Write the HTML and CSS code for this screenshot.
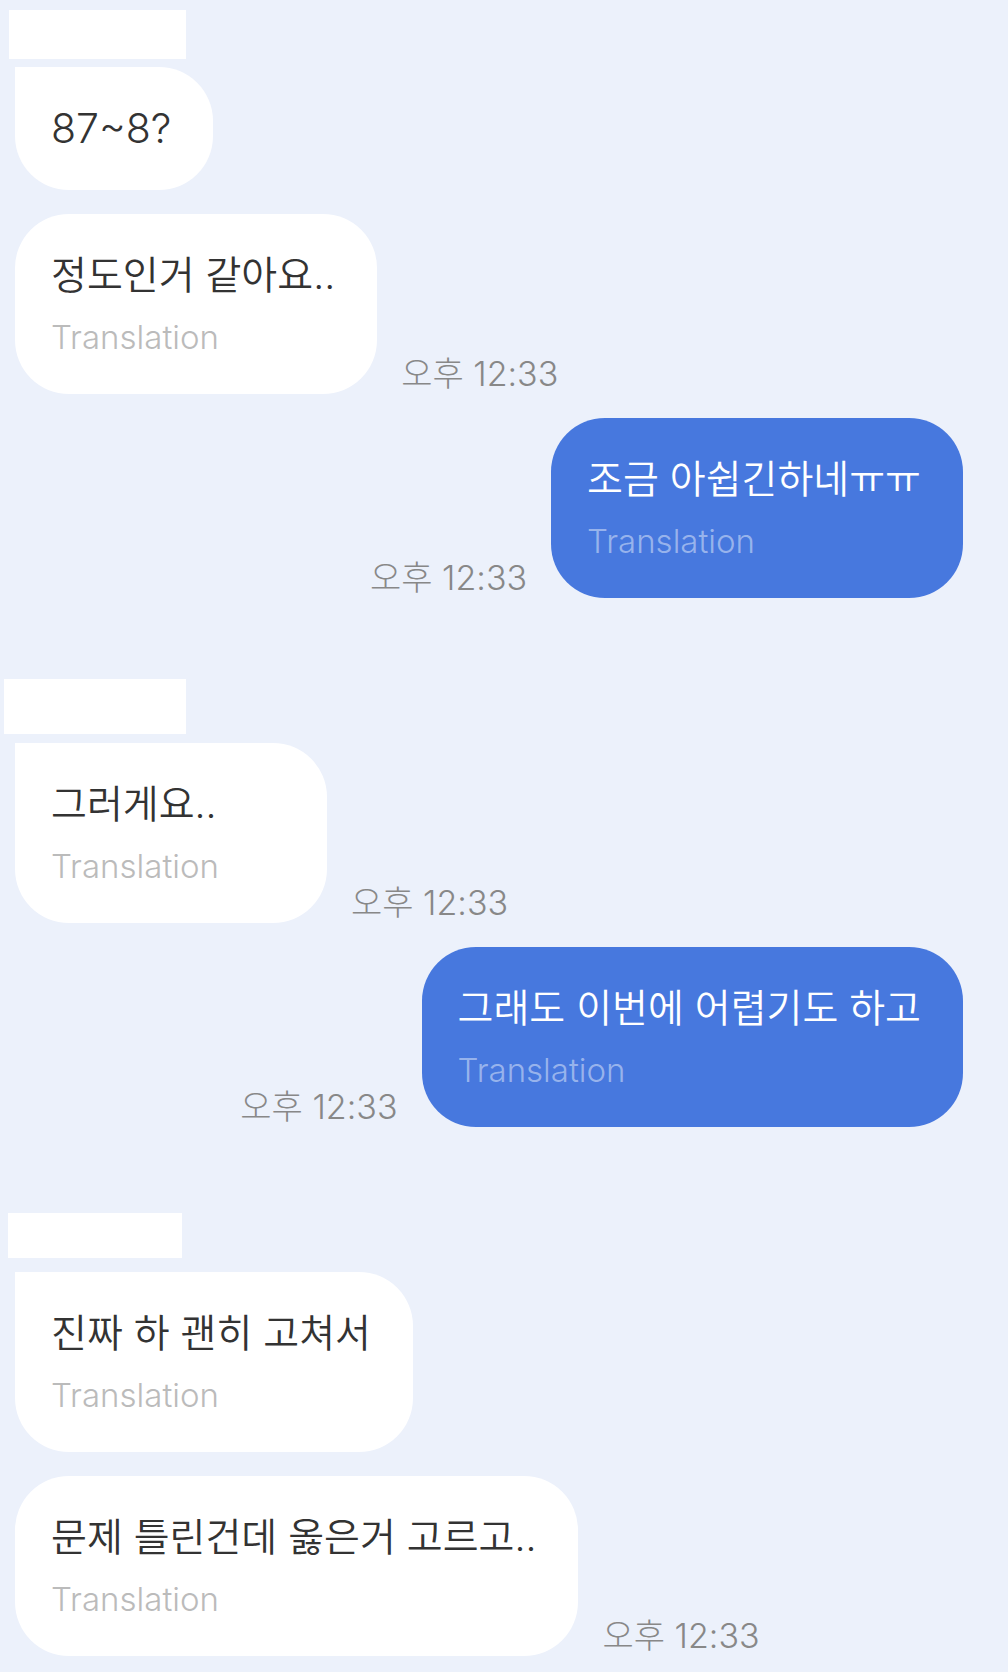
FILE: index.html
```html
<!DOCTYPE html>
<html lang="ko">
<head>
  <meta charset="UTF-8" />
  <meta name="viewport" content="width=device-width, initial-scale=1.0"/>
  <title>Chat</title>
  <link rel="stylesheet" href="styles.css">
</head>
<body>

  <main class="chat">
    <section class="group received">
      <div class="name"></div>
      <div class="row">
        <div class="bubble first">
          <p class="message latin">87~8?</p>
        </div>
      </div>
      <div class="row">
        <div class="bubble">
          <p class="message">정도인거 같아요..</p>
          <p class="translation">Translation</p>
        </div>
        <time class="time" datetime="12:33">오후 12:33</time>
      </div>
    </section>

    <section class="group sent">
      <div class="row">
        <div class="bubble">
          <p class="message">조금 아쉽긴하네ㅠㅠ</p>
          <p class="translation">Translation</p>
        </div>
        <time class="time" datetime="12:33">오후 12:33</time>
      </div>
    </section>

    <section class="group received">
      <div class="name name-large"></div>
      <div class="row">
        <div class="bubble first">
          <p class="message">그러게요..</p>
          <p class="translation">Translation</p>
        </div>
        <time class="time" datetime="12:33">오후 12:33</time>
      </div>
    </section>

    <section class="group sent">
      <div class="row">
        <div class="bubble">
          <p class="message">그래도 이번에 어렵기도 하고</p>
          <p class="translation">Translation</p>
        </div>
        <time class="time" datetime="12:33">오후 12:33</time>
      </div>
    </section>

    <section class="group received">
      <div class="name name-small"></div>
      <div class="row">
        <div class="bubble first">
          <p class="message">진짜 하 괜히 고쳐서</p>
          <p class="translation">Translation</p>
        </div>
      </div>
      <div class="row">
        <div class="bubble">
          <p class="message">문제 틀린건데 옳은거 고르고..</p>
          <p class="translation">Translation</p>
        </div>
        <time class="time" datetime="12:33">오후 12:33</time>
      </div>
    </section>
  </main>

</body>
</html>
```
FILE: styles.css
```css
:root {
  --background: #ecf1fb;
  --received: #fff;
  --sent: #4778de;
  --text: #333;
  --muted: #bbb;
  --time: #888;
  --radius: 54px;
  --gap: 24px;
}

* {
  box-sizing: border-box;
}

body {
  margin: 0;
  background: var(--background);
  font-family: Inter, 'Noto Sans CJK KR', sans-serif;
  color: var(--text);
}

.chat {
  padding: 10px 45px 16px 15px;
}

.group {
  display: flex;
  flex-direction: column;
  gap: var(--gap);
}

.group.sent {
  margin-top: var(--gap);
}

.sent + .received {
  margin-top: 81px;
}

/* name plate above the first bubble of a group */
.name {
  width: 177px;
  height: 49px;
  margin: 0 0 -16px -6px;
  background: var(--received);
}

.name-large {
  width: 182px;
  height: 55px;
  margin: 0 0 -15px -11px;
}

.name-small {
  width: 174px;
  height: 45px;
  margin: 5px 0 -10px -7px;
}

.row {
  display: flex;
  align-items: flex-end;
  gap: var(--gap);
}

.sent .row {
  flex-direction: row-reverse;
}

.bubble {
  padding: 34px 42px 34px 36px;
  border-radius: var(--radius);
  background: var(--received);
}

.bubble.first {
  border-top-left-radius: 0;
}

.sent .bubble {
  background: var(--sent);
  color: #fff;
}

.message {
  margin: 0;
  font-size: 39px;
  font-weight: 350;
  line-height: 53px;
}

.message.latin {
  font-size: 41px;
  line-height: 55px;
}

.translation {
  min-width: 234px;
  margin: 14px 0 0;
  font-size: 33px;
  font-weight: 300;
  line-height: 45px;
  color: var(--muted);
}

.sent .translation {
  color: rgba(255, 255, 255, 0.45);
}

.time {
  font-size: 34px;
  font-weight: 300;
  line-height: 40px;
  color: var(--time);
}
```
